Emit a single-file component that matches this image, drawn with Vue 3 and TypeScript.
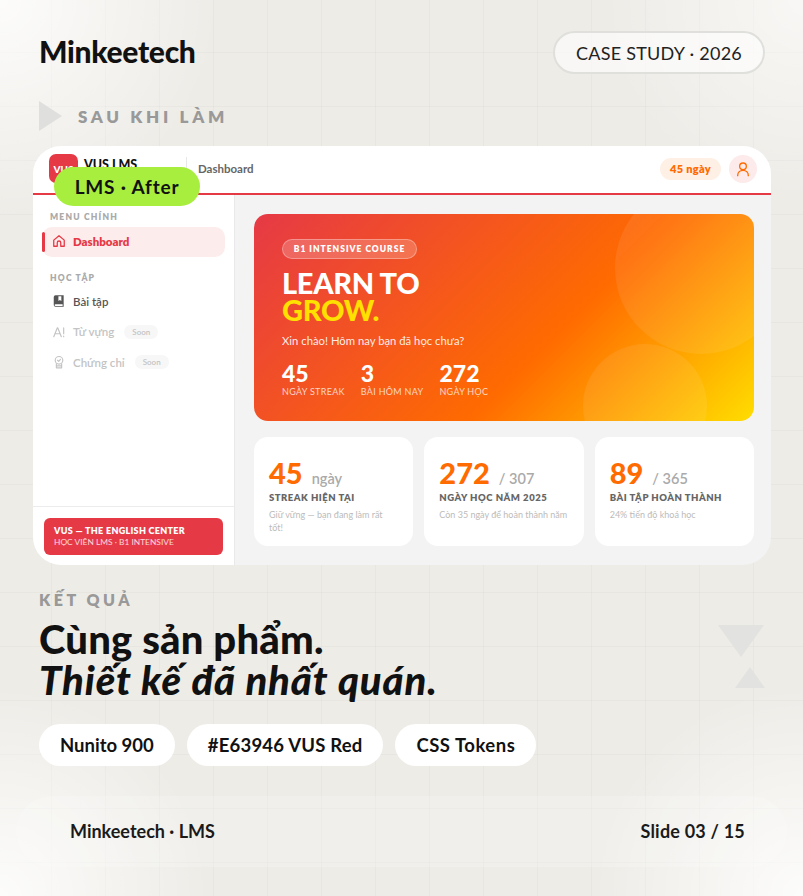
<template>
  <div class="slide">
    <header class="top">
      <h1 class="brand">Minkeetech</h1>
      <span class="case">CASE STUDY · 2026</span>
    </header>

    <div class="section">
      <span class="play"></span>
      <span class="section-text">SAU KHI LÀM</span>
    </div>

    <div class="frame">
      <span class="tag">LMS · After</span>
      <div class="topbar">
        <div class="logo">
          <span class="logo-mark">VUS</span>
          <span class="logo-name">VUS LMS</span>
        </div>
        <span class="crumb">Dashboard</span>
        <span class="streak">45 ngày</span>
        <span class="avatar">
          <svg width="16" height="16" viewBox="0 0 24 24" fill="none" stroke="#ff6b00" stroke-width="2" stroke-linecap="round" stroke-linejoin="round">
            <circle cx="12" cy="8" r="5" />
            <path d="M4 22c0-5 3.5-8 8-8s8 3 8 8" />
          </svg>
        </span>
      </div>
      <div class="body">
        <aside class="side">
          <div class="nav">
            <div class="nav-title">MENU CHÍNH</div>
            <div class="nav-item active">
              <svg class="nav-icon" viewBox="0 0 24 24" fill="none" stroke="currentColor" stroke-width="2.200" stroke-linecap="round" stroke-linejoin="round">
                <path d="M3 10.500 12 3l9 7.500V21h-6v-6a3 3 0 0 0-6 0v6H3z" />
              </svg>
              <span>Dashboard</span>
            </div>
            <div class="nav-title second">HỌC TẬP</div>
            <div class="nav-item">
              <svg class="nav-icon" viewBox="0 0 24 24" fill="#555">
                <path d="M6 2h14v20H6a3 3 0 0 1-3-3V5a3 3 0 0 1 3-3zm0 15.500a1.500 1.500 0 0 0 0 3h12.200v-3zM11 4v8l2.500-1.800L16 12V4z" fill-rule="evenodd" />
              </svg>
              <span>Bài tập</span>
            </div>
            <div class="nav-item off">
              <svg class="nav-icon" viewBox="0 0 24 24" fill="none" stroke="currentColor" stroke-width="2" stroke-linecap="round" stroke-linejoin="round">
                <path d="M3 20 9 5h1l6 15M5.500 15h8M20 5v10M20 19v1" />
              </svg>
              <span>Từ vựng</span>
              <span class="soon">Soon</span>
            </div>
            <div class="nav-item off">
              <svg class="nav-icon" viewBox="0 0 24 24" fill="none" stroke="currentColor" stroke-width="2" stroke-linecap="round" stroke-linejoin="round">
                <circle cx="12" cy="9" r="6.500" />
                <path d="m9.500 9 2 2 3-3.500M7.500 15v7h9v-7M7.500 18.500h9" />
              </svg>
              <span>Chứng chỉ</span>
              <span class="soon">Soon</span>
            </div>
          </div>
          <div class="side-foot">
            <div class="org">
              <strong>VUS — THE ENGLISH CENTER</strong>
              <span>HỌC VIÊN LMS · B1 INTENSIVE</span>
            </div>
          </div>
        </aside>
        <main class="main">
          <section class="hero">
            <i class="blob big"></i>
            <i class="blob small"></i>
            <span class="course">B1 INTENSIVE COURSE</span>
            <h2 class="hero-title">LEARN TO<br /><em>GROW.</em></h2>
            <p class="hero-sub">Xin chào! Hôm nay bạn đã học chưa?</p>
            <div class="hero-stats">
              <div v-for="s in heroStats" :key="s.label" class="hero-stat">
                <b>{{ s.value }}</b>
                <span>{{ s.label }}</span>
              </div>
            </div>
          </section>
          <section class="cards">
            <div v-for="c in cards" :key="c.label" class="card">
              <div class="card-num"><b>{{ c.value }}</b><span>{{ c.unit }}</span></div>
              <div class="card-label">{{ c.label }}</div>
              <div class="card-note">{{ c.note }}</div>
            </div>
          </section>
        </main>
      </div>
    </div>

    <div class="result">
      <div class="result-label">KẾT QUẢ</div>
      <h2 class="headline">Cùng sản phẩm.<br /><em>Thiết kế đã nhất quán.</em></h2>
      <div class="chips">
        <span v-for="chip in chips" :key="chip" class="chip">{{ chip }}</span>
      </div>
      <div class="deco">
        <span class="tri-down"></span>
        <span class="tri-up"></span>
      </div>
    </div>

    <footer class="foot">
      <span>Minkeetech · LMS</span>
      <span class="slide-no">Slide 03 / 15</span>
    </footer>
  </div>
</template>

<script setup lang="ts">
const heroStats = [
  { value: '45', label: 'NGÀY STREAK' },
  { value: '3', label: 'BÀI HÔM NAY' },
  { value: '272', label: 'NGÀY HỌC' },
];

const cards = [
  { value: '45', unit: 'ngày', label: 'STREAK HIỆN TẠI', note: 'Giữ vững — bạn đang làm rất tốt!' },
  { value: '272', unit: '/ 307', label: 'NGÀY HỌC NĂM 2025', note: 'Còn 35 ngày để hoàn thành năm' },
  { value: '89', unit: '/ 365', label: 'BÀI TẬP HOÀN THÀNH', note: '24% tiến độ khoá học' },
];

const chips = ['Nunito 900', '#E63946 VUS Red', 'CSS Tokens'];
</script>

<style>
html,
body {
  margin: 0;
  background: #eeece7;
}
</style>

<style scoped>
.slide {
  position: relative;
  width: 803px;
  height: 896px;
  overflow: hidden;
  box-sizing: border-box;
  padding: 31px 38px 0 39px;
  font-family: Lato, 'Noto Sans', sans-serif;
  color: #111;
  background:
    radial-gradient(circle 220px at 0 0, rgba(255, 255, 255, 0.85), rgba(255, 255, 255, 0)),
    radial-gradient(circle 200px at 100% 0, rgba(255, 255, 255, 0.6), rgba(255, 255, 255, 0)),
    radial-gradient(circle 210px at 0 100%, rgba(255, 255, 255, 0.85), rgba(255, 255, 255, 0)),
    radial-gradient(circle 210px at 100% 100%, rgba(255, 255, 255, 0.85), rgba(255, 255, 255, 0)),
    linear-gradient(to right, rgba(0, 0, 0, 0.028) 1px, transparent 1px) 51px 0 / 54px 54px,
    linear-gradient(to bottom, rgba(0, 0, 0, 0.028) 1px, transparent 1px) 0 52px / 54px 54px,
    #eeece7;
}

/* Header */
.top {
  display: flex;
  align-items: center;
  justify-content: space-between;
  height: 43px;
}

.brand {
  margin: 0 0 3px;
  font-size: 30px;
  font-weight: 900;
  line-height: 40px;
  letter-spacing: -0.3px;
}

.case {
  box-sizing: border-box;
  display: flex;
  align-items: center;
  justify-content: center;
  width: 212px;
  height: 43px;
  border: 2px solid #dfdfdc;
  border-radius: 22px;
  background: rgba(255, 255, 255, 0.6);
  font-size: 18px;
  letter-spacing: 0.25px;
  color: #222;
}

.section {
  display: flex;
  align-items: center;
  gap: 16px;
  height: 30px;
  margin-top: 27px;
}

.play {
  width: 0;
  height: 0;
  border-left: 23px solid #dfdfde;
  border-top: 15px solid transparent;
  border-bottom: 15px solid transparent;
}

.section-text {
  font-size: 17px;
  font-weight: 800;
  letter-spacing: 3.700px;
  color: #999;
}

/* App frame */
.frame {
  position: relative;
  display: flex;
  flex-direction: column;
  width: 738px;
  height: 419px;
  margin: 15px 0 0 -6px;
  overflow: hidden;
  border-radius: 28px;
  background: #f3f3f3;
}

.tag {
  position: absolute;
  top: 21px;
  left: 21px;
  display: flex;
  align-items: center;
  justify-content: center;
  width: 146px;
  height: 39px;
  border-radius: 20px;
  background: #a8ee3e;
  font-size: 19px;
  font-weight: 700;
  letter-spacing: 0.800px;
}

.topbar {
  box-sizing: border-box;
  display: flex;
  align-items: center;
  flex-shrink: 0;
  height: 49px;
  padding: 0 14px 2px 16px;
  background: #fff;
  border-bottom: 2.500px solid #e63946;
}

.logo {
  display: flex;
  align-items: center;
  gap: 6px;
  width: 137px;
  height: 23px;
  border-right: 1px solid #e8e8e8;
}

.logo-mark {
  display: flex;
  align-items: center;
  justify-content: center;
  flex-shrink: 0;
  width: 29px;
  height: 29px;
  border-radius: 7px;
  background: #e63946;
  color: #fff;
  font-size: 10px;
  font-weight: 900;
}

.logo-name {
  margin-bottom: 9px;
  font-size: 12.500px;
  font-weight: 900;
}

.crumb {
  margin-left: 11px;
  font-size: 11.500px;
  font-weight: 700;
  color: #666;
}

.streak {
  display: flex;
  align-items: center;
  justify-content: center;
  width: 61px;
  height: 22px;
  margin-left: auto;
  border-radius: 11px;
  background: #fff0e6;
  font-size: 11px;
  font-weight: 800;
  letter-spacing: 0.300px;
  color: #ff6b00;
}

.avatar {
  display: flex;
  align-items: center;
  justify-content: center;
  width: 28px;
  height: 28px;
  margin-left: 8px;
  border-radius: 50%;
  background: #fdeaea;
}

.body {
  display: flex;
  flex: 1;
  min-height: 0;
}

/* Sidebar */
.side {
  box-sizing: border-box;
  display: flex;
  flex-direction: column;
  justify-content: space-between;
  width: 202px;
  background: #fff;
  border-right: 1px solid #e9e9e9;
}

.nav {
  padding: 17px 9px 0;
}

.nav-title {
  height: 11px;
  padding-left: 8px;
  font-size: 8.500px;
  line-height: 11px;
  font-weight: 800;
  letter-spacing: 1.200px;
  color: #aaa;
}

.nav-title.second {
  margin-top: 16px;
  margin-bottom: 3px;
}

.nav-item {
  position: relative;
  display: flex;
  align-items: center;
  width: 183px;
  height: 30px;
  margin-bottom: 0.500px;
  box-sizing: border-box;
  padding: 0 0 2px 10px;
  border-radius: 10px;
  font-size: 11.500px;
  font-weight: 600;
  color: #555;
}

.nav-item.active {
  margin-top: 4px;
  background: #fdecec;
  font-weight: 800;
  color: #e63946;
}

.nav-item.active::before {
  content: '';
  position: absolute;
  left: 0;
  top: 5px;
  width: 2.500px;
  height: 20px;
  border-radius: 2px;
  background: #e63946;
}

.nav-item.off {
  color: #c4c4c4;
}

.nav-icon {
  flex-shrink: 0;
  width: 14px;
  height: 14px;
  margin-right: 7px;
}

.soon {
  margin-left: 10px;
  padding: 1px 8px;
  border-radius: 8px;
  background: #f7f7f7;
  font-size: 8px;
  line-height: 12px;
  font-weight: 600;
  color: #c4c4c4;
}

.side-foot {
  box-sizing: border-box;
  height: 59px;
  padding: 11px 11px 0;
  border-top: 1px solid #ececec;
}

.org {
  box-sizing: border-box;
  display: flex;
  flex-direction: column;
  justify-content: center;
  gap: 1px;
  width: 179px;
  height: 37px;
  padding-left: 10px;
  border-radius: 6px;
  background: #e63946;
  color: #fff;
  font-size: 8.400px;
  line-height: 11px;
}

.org strong {
  font-size: 9px;
  font-weight: 800;
  letter-spacing: 0.300px;
}

.org span {
  opacity: 0.8;
}

/* Main column */
.main {
  flex: 1;
  padding: 19px 17px 0 19px;
}

.hero {
  position: relative;
  box-sizing: border-box;
  height: 207px;
  padding: 25px 0 0 28px;
  overflow: hidden;
  border-radius: 14px;
  background: linear-gradient(135deg, #e63946 0%, #ff6b00 60%, #ffdd00 100%);
  color: #fff;
}

.blob {
  position: absolute;
  border-radius: 50%;
  background: rgba(255, 255, 255, 0.08);
}

.blob.big {
  left: 361px;
  top: -32px;
  width: 172px;
  height: 172px;
}

.blob.small {
  left: 329px;
  top: 130px;
  width: 124px;
  height: 124px;
}

.course {
  position: relative;
  box-sizing: border-box;
  display: flex;
  align-items: center;
  justify-content: center;
  width: 135px;
  height: 20px;
  border: 1px solid rgba(255, 255, 255, 0.3);
  border-radius: 10px;
  background: rgba(255, 255, 255, 0.2);
  font-size: 8.500px;
  font-weight: 800;
  letter-spacing: 1px;
}

.hero-title {
  position: relative;
  margin: 10px 0 0;
  font-size: 29px;
  line-height: 27px;
  font-weight: 900;
  letter-spacing: -0.300px;
}

.hero-title em {
  font-style: normal;
  color: #ffe000;
}

.hero-sub {
  position: relative;
  margin: 11px 0 0;
  font-size: 11.300px;
  line-height: 14px;
  color: rgba(255, 255, 255, 0.9);
}

.hero-stats {
  position: relative;
  display: flex;
  gap: 16px;
  margin-top: 13px;
}

.hero-stat {
  display: flex;
  flex-direction: column;
}

.hero-stat b {
  font-size: 23px;
  line-height: 25px;
  font-weight: 900;
}

.hero-stat span {
  font-size: 9px;
  line-height: 12px;
  letter-spacing: 0.3px;
  color: rgba(255, 255, 255, 0.75);
}

.cards {
  display: flex;
  gap: 11px;
  margin-top: 16px;
}

.card {
  box-sizing: border-box;
  flex: 1;
  height: 109px;
  padding: 19px 15px 0;
  border-radius: 14px;
  background: #fff;
}

.card-num {
  display: flex;
  align-items: baseline;
  gap: 9px;
  height: 34px;
}

.card-num b {
  font-size: 29px;
  line-height: 34px;
  font-weight: 900;
  color: #ff6b00;
}

.card-num span {
  font-size: 14.500px;
  font-weight: 600;
  color: #aaa;
}

.card-label {
  margin-top: 2px;
  font-size: 9.500px;
  line-height: 12px;
  font-weight: 800;
  letter-spacing: 0.500px;
  color: #666;
}

.card-note {
  max-width: 128px;
  margin-top: 5px;
  font-size: 9px;
  line-height: 12.500px;
  color: #bbb;
}

/* Result block */
.result {
  position: relative;
  margin-top: 25px;
}

.result-label {
  font-size: 16px;
  line-height: 20px;
  font-weight: 800;
  letter-spacing: 3.500px;
  color: #999;
}

.headline {
  margin: 9px 0 0;
  font-size: 40px;
  line-height: 41px;
  font-weight: 900;
  letter-spacing: 0.200px;
}

.headline em {
  font-style: italic;
  letter-spacing: 0.900px;
}

.chips {
  display: flex;
  gap: 12px;
  margin-top: 23px;
}

.chip {
  display: flex;
  align-items: center;
  height: 42px;
  padding: 0 21px;
  border-radius: 21px;
  background: #fff;
  font-size: 18.500px;
  font-weight: 700;
}

.chip:nth-child(2) {
  letter-spacing: 0.200px;
}

.chip:nth-child(3) {
  letter-spacing: 0.500px;
}

.deco {
  position: absolute;
  top: 35px;
  right: 0;
  display: flex;
  flex-direction: column;
  align-items: flex-end;
  gap: 10px;
}

.tri-down {
  width: 0;
  height: 0;
  margin-right: 1px;
  border-top: 32px solid #e2e2e1;
  border-left: 23.500px solid transparent;
  border-right: 23.500px solid transparent;
}

.tri-up {
  width: 0;
  height: 0;
  border-bottom: 21px solid #e2e2e1;
  border-left: 15px solid transparent;
  border-right: 15px solid transparent;
}

/* Footer */
.foot {
  position: absolute;
  left: 16px;
  right: 16px;
  bottom: 29px;
  box-sizing: border-box;
  display: flex;
  align-items: center;
  justify-content: space-between;
  height: 71px;
  padding: 0 42px 2px 54px;
  border-radius: 36px;
  background: rgba(255, 255, 255, 0.2);
  font-size: 18px;
  font-weight: 700;
  color: #1a1a1a;
}

.slide-no {
  letter-spacing: 0.200px;
}
</style>
